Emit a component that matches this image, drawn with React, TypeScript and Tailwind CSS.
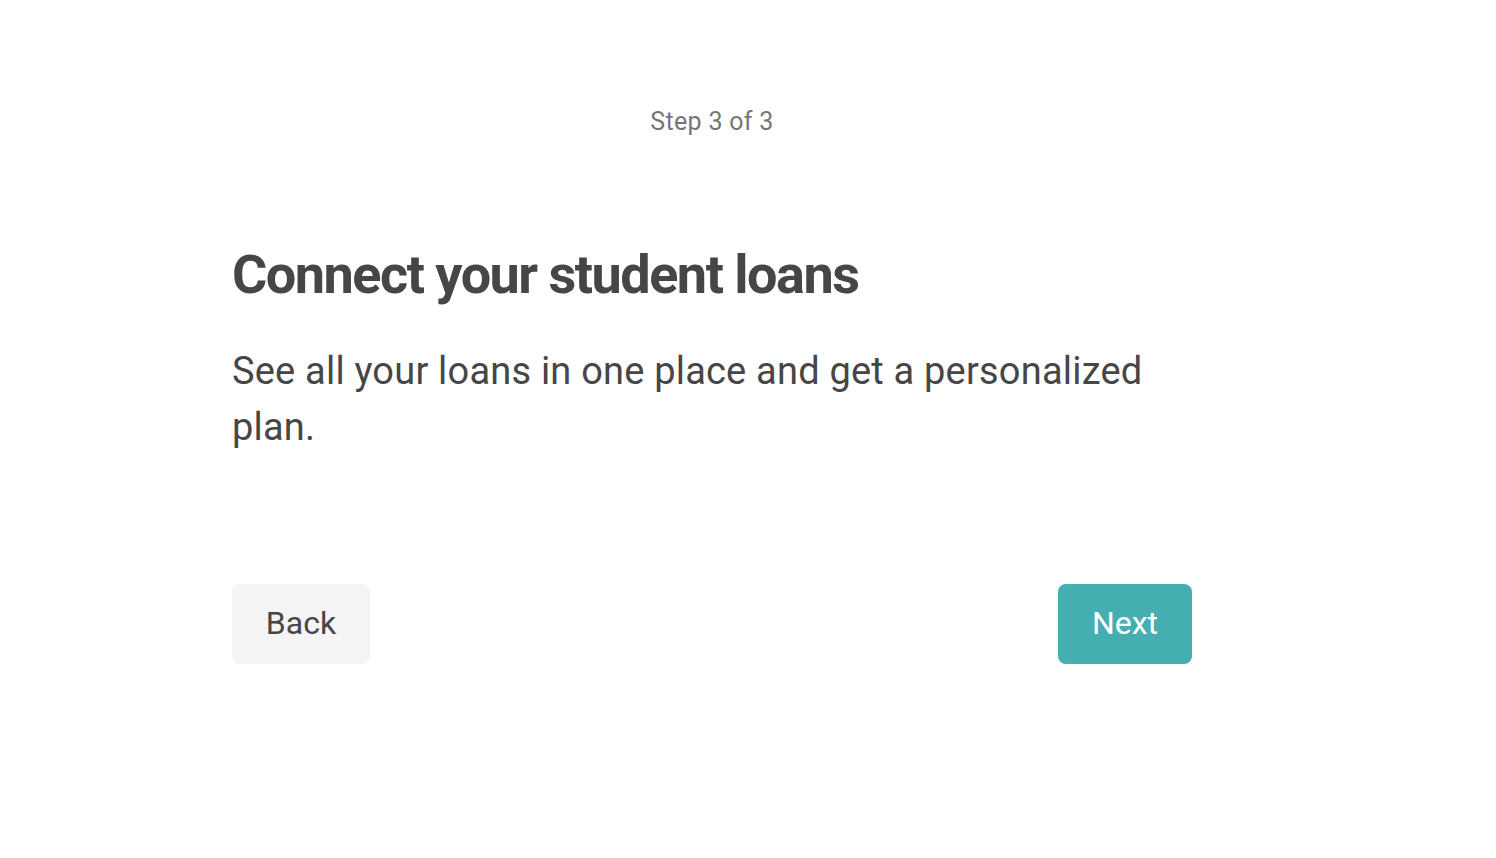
export default function App() {
  return (
    <div className="min-h-screen bg-white font-['Roboto',sans-serif]">
      <div className="ml-[232px] w-[960px] pt-[106px]">
        <p className="text-center text-[25px] leading-[32px] tracking-[0.3px] text-[#767676]">
          Step 3 of 3
        </p>
        <h1 className="mt-[107px] text-[54px] leading-[60px] font-bold tracking-[-1.5px] text-[#464646]">
          Connect your student loans
        </h1>
        <p className="mt-[38px] text-[38px] leading-[56px] tracking-[0.2px] text-[#464646]">
          See all your loans in one place and get a personalized plan.
        </p>
        <div className="mt-[129px] flex items-center justify-between">
          <button className="h-[80px] w-[138px] rounded-lg bg-[#f4f4f4] pb-[2px] text-[32px] text-[#464646]">
            Back
          </button>
          <button className="h-[80px] w-[134px] rounded-lg bg-[#45aeb0] pb-[2px] text-[32px] text-white">
            Next
          </button>
        </div>
      </div>
    </div>
  );
}
